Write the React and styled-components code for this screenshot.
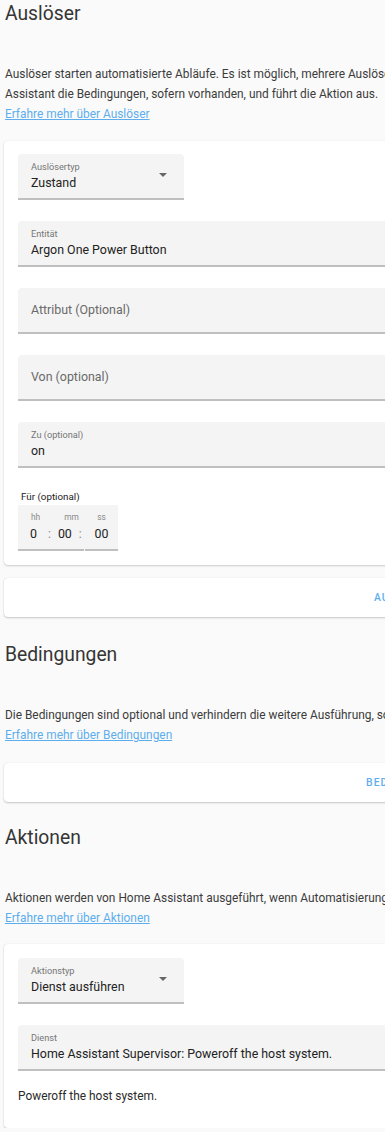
import React from "react";
import styled, { createGlobalStyle } from "styled-components";

const GlobalStyle = createGlobalStyle`
  html, body {
    margin: 0;
    padding: 0;
    background: #fafafa;
    overflow: hidden;
  }
  body {
    font-family: Roboto, "Liberation Sans", sans-serif;
    color: #333;
  }
`;

const Page = styled.div`
  width: 522px;
  padding: 0 0 0 4px;
`;

const Section = styled.section`
  display: flex;
  flex-direction: column;
  margin-top: ${(p) => p.$top || 0}px;
`;

const Header = styled.h1`
  margin: 0;
  padding-left: 1px;
  font-size: 19.3px;
  font-weight: 400;
  line-height: 28px;
  color: #353535;
`;

const Intro = styled.p`
  margin: 36px 0 0;
  padding-left: 1px;
  font-size: 11.9px;
  line-height: 20px;
  color: #3c3c3c;
  white-space: nowrap;
`;

const Link = styled.a`
  color: #5eaeee;
  text-decoration: underline;
`;

const Card = styled.div`
  margin-top: ${(p) => p.$top || 17}px;
  background: #fff;
  border-radius: 4px;
  box-shadow: 0 1px 2px rgba(0, 0, 0, 0.18), 0 0 1px rgba(0, 0, 0, 0.12);
  padding: ${(p) => p.$pad || "13px 0 14px 14px"};
  display: flex;
  flex-direction: column;
  gap: 21px;
`;

const ActionCard = styled.div`
  margin-top: ${(p) => p.$top || 13}px;
  height: 39px;
  background: #fff;
  border-radius: 4px;
  box-shadow: 0 1px 2px rgba(0, 0, 0, 0.2), 0 0 1px rgba(0, 0, 0, 0.12);
  display: flex;
  align-items: center;
  justify-content: flex-end;
  padding-right: 14px;
`;

const TextButton = styled.span`
  color: #5eaeee;
  font-size: 10.4px;
  font-weight: 500;
  letter-spacing: 1.1px;
  text-transform: uppercase;
`;

const Field = styled.div`
  position: relative;
  width: ${(p) => (p.$narrow ? "166px" : "auto")};
  height: 46px;
  box-sizing: border-box;
  background: #f4f4f4;
  border-radius: 4px 4px 0 0;
  border-bottom: 2px solid #bfbfbf;
  padding: 0 13px;
  display: flex;
  flex-direction: column;
  justify-content: center;
`;

const FieldLabel = styled.span`
  font-size: 9.2px;
  color: #767676;
  line-height: 12px;
  margin-bottom: 2px;
`;

const FieldValue = styled.span`
  font-size: 12.4px;
  color: #222;
  line-height: 16px;
`;

const Placeholder = styled.span`
  font-size: 12.4px;
  color: #6a6a6a;
  line-height: 16px;
`;

const Arrow = styled.span`
  position: absolute;
  right: 17px;
  top: 19px;
  width: 0;
  height: 0;
  border-left: 4px solid transparent;
  border-right: 4px solid transparent;
  border-top: 4px solid #666;
`;

const DurationBlock = styled.div`
  display: flex;
  flex-direction: column;
  margin-top: 2px;
`;

const DurationLabel = styled.span`
  font-size: 9.8px;
  color: #222;
  padding-left: 3px;
  line-height: 12px;
`;

const DurationBox = styled.div`
  margin-top: 2px;
  width: 100px;
  height: 46px;
  box-sizing: border-box;
  background: #f4f4f4;
  display: flex;
  align-items: stretch;
  gap: 1px;
`;

const Unit = styled.div`
  display: flex;
  flex-direction: column;
  align-items: ${(p) => (p.$center ? "center" : "flex-start")};
  justify-content: center;
  width: ${(p) => p.$w}px;
  border-bottom: 2px solid #bfbfbf;
  box-sizing: border-box;
`;

const UnitRow = styled.div`
  display: flex;
  align-items: center;
  padding-left: ${(p) => p.$pl || 0}px;
  gap: ${(p) => p.$gap || 0}px;
`;

const UnitLabel = styled.span`
  font-size: 8.4px;
  color: #8a8a8a;
  line-height: 11px;
  margin-bottom: 3px;
`;

const UnitValue = styled.span`
  font-size: 12.4px;
  color: #222;
  line-height: 16px;
`;

const Colon = styled.span`
  font-size: 12px;
  color: #888;
  margin: 0 ${(p) => p.$r || 0}px 0 ${(p) => p.$l || 0}px;
`;

const Description = styled.div`
  font-size: 11.9px;
  color: #2a2a2a;
  line-height: 16px;
  padding: 3px 0 10px 0;
  margin-top: -7px;
`;

function Duration() {
  return (
    <DurationBlock>
      <DurationLabel>Für (optional)</DurationLabel>
      <DurationBox>
        <Unit $w={66}>
          <UnitRow $pl={13} $gap={24}>
            <UnitLabel>hh</UnitLabel>
            <UnitLabel>mm</UnitLabel>
          </UnitRow>
          <UnitRow $pl={12}>
            <UnitValue>0</UnitValue>
            <Colon $l={11} $r={7}>:</Colon>
            <UnitValue>00</UnitValue>
            <Colon $l={7}>:</Colon>
          </UnitRow>
        </Unit>
        <Unit $w={33} $center>
          <UnitLabel>ss</UnitLabel>
          <UnitValue>00</UnitValue>
        </Unit>
      </DurationBox>
    </DurationBlock>
  );
}

export default function App() {
  return (
    <Page>
      <GlobalStyle />

      <Section>
        <Header>Auslöser</Header>
        <Intro>
          Auslöser starten automatisierte Abläufe. Es ist möglich, mehrere Auslöser für dieselbe Automatisierung zu definieren.
          <br />
          Assistant die Bedingungen, sofern vorhanden, und führt die Aktion aus.
          <br />
          <Link href="#">Erfahre mehr über Auslöser</Link>
        </Intro>
        <Card>
          <Field $narrow>
            <FieldLabel>Auslösertyp</FieldLabel>
            <FieldValue>Zustand</FieldValue>
            <Arrow />
          </Field>
          <Field>
            <FieldLabel>Entität</FieldLabel>
            <FieldValue>Argon One Power Button</FieldValue>
          </Field>
          <Field>
            <Placeholder>Attribut (Optional)</Placeholder>
          </Field>
          <Field>
            <Placeholder>Von (optional)</Placeholder>
          </Field>
          <Field>
            <FieldLabel>Zu (optional)</FieldLabel>
            <FieldValue>on</FieldValue>
          </Field>
          <Duration />
        </Card>
        <ActionCard>
          <TextButton>Auslöser hinzufügen</TextButton>
        </ActionCard>
      </Section>

      <Section $top={24}>
        <Header>Bedingungen</Header>
        <Intro>
          Die Bedingungen sind optional und verhindern die weitere Ausführung, sofern nicht alle Bedingungen erfüllt sind.
          <br />
          <Link href="#">Erfahre mehr über Bedingungen</Link>
        </Intro>
        <ActionCard $top={18}>
          <TextButton>Bedingung hinzufügen</TextButton>
        </ActionCard>
      </Section>

      <Section $top={22}>
        <Header>Aktionen</Header>
        <Intro>
          Aktionen werden von Home Assistant ausgeführt, wenn Automatisierungen ausgelöst werden.
          <br />
          <Link href="#">Erfahre mehr über Aktionen</Link>
        </Intro>
        <Card $top={16} $pad="14px 0 14px 14px">
          <Field $narrow>
            <FieldLabel>Aktionstyp</FieldLabel>
            <FieldValue>Dienst ausführen</FieldValue>
            <Arrow />
          </Field>
          <Field>
            <FieldLabel>Dienst</FieldLabel>
            <FieldValue>Home Assistant Supervisor: Poweroff the host system.</FieldValue>
          </Field>
          <Description>Poweroff the host system.</Description>
        </Card>
      </Section>
    </Page>
  );
}
